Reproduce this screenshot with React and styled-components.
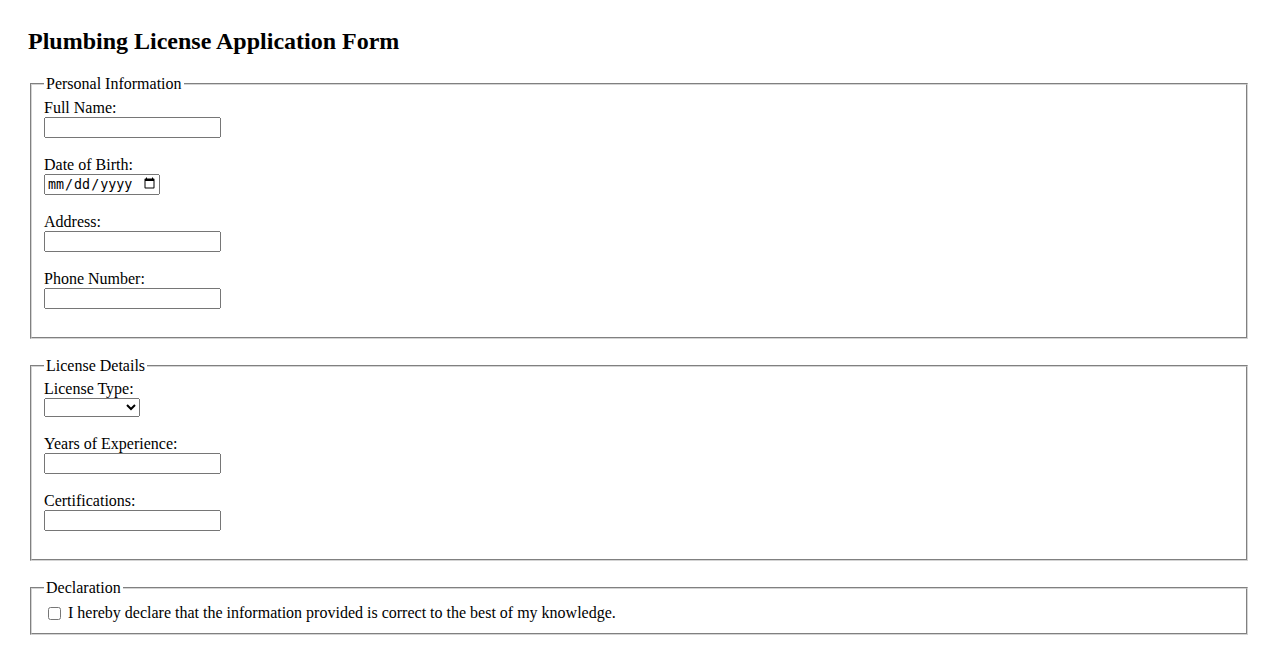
import React from 'react'
import styled, { createGlobalStyle } from 'styled-components'

const GlobalStyle = createGlobalStyle`
    body {
        margin: 0;
        padding: 28px;
        background: #fff;
        color: #000;
        font-family: "Liberation Serif", "Times New Roman", serif;
        font-size: 16px;
    }
`

const Title = styled.h2`
    font-size: 24px;
    font-weight: bold;
    margin: 0 0 20px;
`

const Section = styled.fieldset`
    margin: 0 2px 18px;
    padding: 5.6px 12px 10px;
    border: 2px groove rgb(212, 212, 212);
`

const Legend = styled.legend`
    padding: 0 2px;
`

const Field = styled.div`
    margin-bottom: ${props => props.gap || 18}px;
`

const FieldLabel = styled.label`
    display: block;
    line-height: 18px;
`

const TextInput = styled.input`
    display: block;
    box-sizing: border-box;
    width: ${props => props.width || 177}px;
    height: 21px;
    margin: 0;
    font-size: 13.33px;
`

const Select = styled.select`
    display: block;
    box-sizing: border-box;
    width: 96px;
    height: 19px;
    margin: 0;
    font-size: 13.33px;
`

const CheckRow = styled.label`
    display: flex;
    align-items: center;
    height: 20px;
`

const Check = styled.input`
    width: 13px;
    height: 13px;
    margin: 1px 7px 0 4px;
`

const App = () => (
    <form>
        <GlobalStyle />
        <Title>Plumbing License Application Form</Title>

        <Section>
            <Legend>Personal Information</Legend>
            <Field>
                <FieldLabel htmlFor="name">Full Name:</FieldLabel>
                <TextInput id="name" type="text" />
            </Field>
            <Field>
                <FieldLabel htmlFor="dob">Date of Birth:</FieldLabel>
                <TextInput id="dob" type="date" width={116} />
            </Field>
            <Field>
                <FieldLabel htmlFor="address">Address:</FieldLabel>
                <TextInput id="address" type="text" />
            </Field>
            <Field>
                <FieldLabel htmlFor="phone">Phone Number:</FieldLabel>
                <TextInput id="phone" type="tel" />
            </Field>
        </Section>

        <Section>
            <Legend>License Details</Legend>
            <Field>
                <FieldLabel htmlFor="type">License Type:</FieldLabel>
                <Select id="type" defaultValue="">
                    <option value=""></option>
                    <option value="journeyman">Journeyman</option>
                    <option value="master">Master</option>
                </Select>
            </Field>
            <Field>
                <FieldLabel htmlFor="years">Years of Experience:</FieldLabel>
                <TextInput id="years" type="number" />
            </Field>
            <Field>
                <FieldLabel htmlFor="certs">Certifications:</FieldLabel>
                <TextInput id="certs" type="text" />
            </Field>
        </Section>

        <Section>
            <Legend>Declaration</Legend>
            <CheckRow>
                <Check type="checkbox" />
                I hereby declare that the information provided is correct to the best of my knowledge.
            </CheckRow>
        </Section>
    </form>
)

export default App
